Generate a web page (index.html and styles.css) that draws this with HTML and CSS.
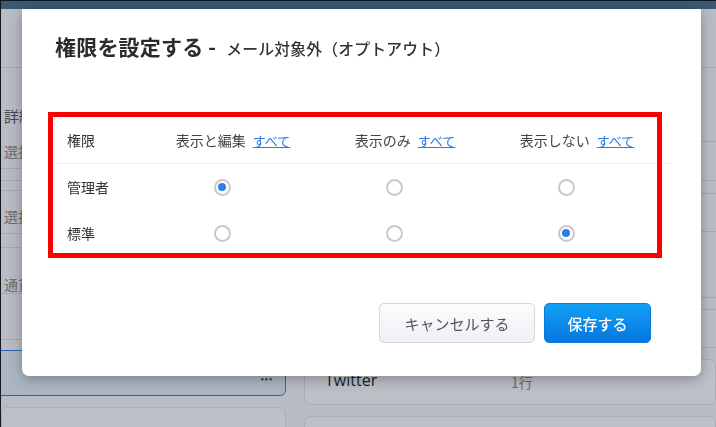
FILE: index.html
```html
<!DOCTYPE html>
<html lang="ja">
<head>
  <meta charset="UTF-8" />
  <title>権限を設定する</title>
  <link rel="stylesheet" href="styles.css">
</head>
<body>
  <div class="app">
    <header class="topbar"></header>
    <div class="content">
      <div class="col-left">
        <div class="row r1"></div>
        <div class="row r2">
          <span class="label strong">詳細</span>
          <span class="label">選択肢</span>
        </div>
        <div class="row r3"></div>
        <div class="row r4"></div>
        <div class="row r5"><span class="label">選択肢</span></div>
        <div class="row r6"></div>
        <div class="row r7"><span class="label low">通貨</span></div>
        <div class="row r8"></div>
        <div class="card active">
          <span class="dots">•••</span>
        </div>
        <div class="card"></div>
      </div>
      <div class="col-right">
        <div class="row q1"></div>
        <div class="row q2"></div>
        <div class="row q3"></div>
        <div class="row q4"></div>
        <div class="row q5"></div>
        <div class="row q6"></div>
        <div class="row q7"></div>
        <div class="row q8"></div>
        <div class="card">
          <span class="card-name">Twitter</span>
          <span class="card-meta">1行</span>
        </div>
        <div class="card"></div>
      </div>
    </div>
  </div>

  <div class="overlay">
    <div class="modal">
      <h1 class="modal-title">権限を設定する - <small>メール対象外（オプトアウト）</small></h1>

      <div class="perm-area">
        <div class="perm-table">
          <div class="perm-row head">
            <div class="cell name">権限</div>
            <div class="cell">表示と編集 <a href="#">すべて</a></div>
            <div class="cell">表示のみ <a href="#">すべて</a></div>
            <div class="cell">表示しない <a href="#">すべて</a></div>
          </div>
          <div class="perm-row">
            <div class="cell name">管理者</div>
            <div class="cell radio"><input type="radio" name="admin" checked></div>
            <div class="cell radio"><input type="radio" name="admin"></div>
            <div class="cell radio"><input type="radio" name="admin"></div>
          </div>
          <div class="perm-row">
            <div class="cell name">標準</div>
            <div class="cell radio"><input type="radio" name="std"></div>
            <div class="cell radio"><input type="radio" name="std"></div>
            <div class="cell radio"><input type="radio" name="std" checked></div>
          </div>
        </div>
        <div class="highlight"></div>
      </div>

      <div class="modal-actions">
        <button class="btn btn-cancel">キャンセルする</button>
        <button class="btn btn-save">保存する</button>
      </div>
    </div>
  </div>
</body>
</html>
```

FILE: styles.css
```css
:root {
  --text: #333;
  --muted: #777;
  --line: #d7dce3;
  --link: #2a7ae2;
  --blue: #1088ea;
}

* {
  margin: 0;
  padding: 0;
  box-sizing: border-box;
}

body {
  font-family: 'Noto Sans CJK JP', 'Noto Sans', sans-serif;
  color: var(--text);
  background: #f5f6f8;
  width: 716px;
  height: 427px;
  overflow: hidden;
}

/* page behind the dialog */
.app {
  height: 427px;
  overflow: hidden;
  border-left: 1px solid #111;
  border-top: 1px solid #111;
}

.topbar {
  height: 8px;
  background: #466d8a;
}

.content {
  display: flex;
  gap: 18px;
}

.col-left {
  width: 285px;
  flex: none;
}

.col-right {
  flex: 1;
}

.row {
  border-bottom: 1px solid var(--line);
}

.label {
  display: block;
  font-size: 14px;
  color: #888;
  padding-left: 3px;
  padding-top: 15px;
  line-height: 20px;
}

.label.strong {
  color: #555;
  font-size: 15px;
  padding-top: 38px;
}

.label.low { padding-top: 26px; }

.r1 { height: 59px; }
.r2 { height: 101px; }
.r3 { height: 12px; }
.r4 { height: 10px; }
.r5 { height: 43px; }
.r6 { height: 14px; }
.r7 { height: 46px; }
.r8 { height: 46px; }

.q1 { height: 59px; }
.q2 { height: 74px; }
.q3 { height: 39px; }
.q4 { height: 13px; }
.q5 { height: 38px; }
.q6 { height: 66px; }
.q7 { height: 12px; }
.q8 { height: 38px; }

.card {
  height: 46px;
  margin-top: 11px;
  border: 1px solid #dfe3e8;
  border-radius: 6px;
  background: #fafbfc;
  display: flex;
  align-items: center;
  padding: 0 20px;
}

.card.active {
  margin-top: 10px;
  border-color: #2f7de1;
  background: #e3ecf8;
  justify-content: flex-end;
  padding: 0 12px;
  margin-left: -6px;
}

.dots {
  font-size: 9px;
  letter-spacing: 1px;
  color: #444;
  padding-top: 10px;
}

.card-name {
  font-family: 'Open Sans', sans-serif;
  font-size: 16px;
  color: #222;
  width: 186px;
  padding-bottom: 4px;
}

.card-meta {
  font-size: 14px;
  color: #888;
}

/* dialog */
.overlay {
  position: fixed;
  inset: 0;
  background: rgba(30, 40, 60, 0.28);
  padding: 9px 15px 0 22px;
}

.modal {
  background: #fff;
  height: 367px;
  border-radius: 0 0 7px 7px;
  box-shadow: 0 3px 14px rgba(0, 0, 0, 0.3);
  padding: 22px 50px 0 33px;
}

.modal-title {
  font-size: 21px;
  font-weight: 700;
  color: #2b2b2b;
  line-height: 30px;
  letter-spacing: 0.2px;
}

.modal-title small {
  font-size: 15.8px;
  font-weight: 500;
  color: #333;
  margin-left: 5px;
}

.perm-area {
  position: relative;
  margin-top: 53px;
  margin-right: -19px;
}

.perm-table {
  display: flex;
  flex-direction: column;
}

.perm-row {
  display: grid;
  grid-template-columns: 92px 172px 172px 172px;
  align-items: center;
  height: 46px;
}

.perm-row.head {
  height: 47px;
  border-bottom: 1px solid #eceef2;
}

.cell {
  font-size: 14px;
  color: #444;
  text-align: center;
  white-space: nowrap;
}

.cell.name {
  text-align: left;
  padding-left: 12px;
  color: #333;
}

.cell a {
  font-size: 13px;
  color: var(--link);
  margin-left: 4px;
}

.cell.radio {
  display: flex;
  justify-content: center;
  padding-right: 22px;
}

.cell.radio input {
  appearance: none;
  width: 17px;
  height: 17px;
  border: 2px solid #c6c9ce;
  border-radius: 50%;
  background: #fff;
  display: grid;
  place-items: center;
}

.cell.radio input:checked::after {
  content: '';
  width: 8px;
  height: 8px;
  border-radius: 50%;
  background: #2b7de9;
}

/* red annotation frame */
.highlight {
  position: absolute;
  left: -7px;
  top: -5px;
  width: 614px;
  height: 146px;
  border: 5px solid #ff0000;
  pointer-events: none;
}

.modal-actions {
  display: flex;
  justify-content: flex-end;
  gap: 9px;
  margin-top: 47px;
}

.btn {
  height: 40px;
  border-radius: 5px;
  font-family: inherit;
  font-size: 15px;
  cursor: pointer;
}

.btn-cancel {
  width: 156px;
  color: #555;
  background: linear-gradient(#fbfcfd, #eef0f4);
  border: 1px solid #d2d6dd;
}

.btn-save {
  width: 107px;
  color: #fff;
  font-weight: 500;
  background: linear-gradient(#12a0f5, #0676e0);
  border: 1px solid #0a7ad8;
}
```
